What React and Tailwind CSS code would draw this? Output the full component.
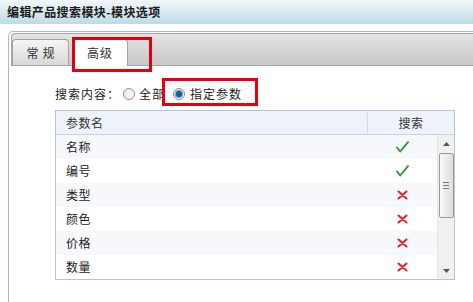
import React from 'react';

const font = { fontFamily: '"Noto Sans CJK SC", "Liberation Sans", sans-serif' };

const rows = [
  { name: '名称', on: true },
  { name: '编号', on: true },
  { name: '类型', on: false },
  { name: '颜色', on: false },
  { name: '价格', on: false },
  { name: '数量', on: false },
];

function Check() {
  return (
    <svg width="13" height="12" viewBox="0 0 13 12">
      <path d="M1 6.5 L4.2 10.5 L12 1.2" fill="none" stroke="#2f9a2f" strokeWidth="1.9" strokeLinecap="round" strokeLinejoin="round" />
    </svg>
  );
}

function Cross() {
  return (
    <svg width="11" height="10" viewBox="0 0 11 10">
      <path d="M1.5 1.5 L9.5 8.5 M9.5 1.5 L1.5 8.5" fill="none" stroke="#e0252b" strokeWidth="2.1" strokeLinecap="round" />
    </svg>
  );
}

function Radio({ checked }) {
  return (
    <span className="w-[12px] h-[12px] rounded-full border border-[#8e8f8f] bg-gradient-to-br from-[#e6e6e6] to-[#ffffff] flex items-center justify-center">
      {checked && <span className="w-[6px] h-[6px] rounded-full bg-[#1b5e97] shadow-[0_0_0_1px_#5fa3d8]" />}
    </span>
  );
}

export default function App() {
  return (
    <div style={font} className="w-[473px] h-[302px] bg-white relative overflow-hidden text-[12px] text-[#222]">
      {/* Title */}
      <div className="h-[24px] bg-gradient-to-b from-[#f3f6f8] to-[#bddbe7] flex items-center pl-[7px] font-bold text-[12px] tracking-[0.4px] text-[#1a1a1a]">
        编辑产品搜索模块-模块选项
      </div>

      {/* Panel */}
      <div className="mt-[7px] ml-[8px] h-[271px] border-l border-t border-[#a4bccb] rounded-tl-[5px]">
        <div className="pt-[1px] pl-[2px]">
          <div className="h-[33px] border-t border-l border-b border-[#a6a6a6] rounded-tl-[4px] bg-gradient-to-b from-[#e4e4e4] to-[#c8c8c8] flex items-end">
            <div className="w-[57px] h-[26px] border border-b-0 border-[#a3a3a3] rounded-t-[4px] bg-gradient-to-b from-[#f5f5f5] to-[#d8d8d8] flex items-center justify-center tracking-[4px] pl-[4px] text-[#333]">
              常规
            </div>
            <div className="ml-[3px] w-[56px] h-[27px] -mb-px border border-b-0 border-[#a3a3a3] rounded-t-[4px] bg-white flex items-center justify-center tracking-[1px] text-[#333]">
              高级
            </div>
          </div>
        </div>

        {/* Body */}
        <div className="pl-[46px] pt-[18px]">
          <div className="h-[20px] flex items-center text-[#222] tracking-[1px]">
            <span>搜索内容：</span>
            <span className="ml-[3px]"><Radio /></span>
            <span className="ml-[4px]">全部</span>
            <span className="ml-[8px]"><Radio checked /></span>
            <span className="ml-[5px]">指定参数</span>
          </div>

          {/* Table */}
          <div className="mt-[6px] w-[400px] border border-[#b5c5d8]">
            <div className="h-[24px] bg-[#eef3fb] border-b border-[#c5d3e5] flex items-center text-[#333] tracking-[0.5px]">
              <div className="w-[311px] pl-[10px]">参数名</div>
              <div className="w-px h-[20px] bg-[#cfd9e7]" />
              <div className="flex-1 text-center">搜索</div>
            </div>
            <div className="flex">
              <div className="flex-1 tracking-[0.5px]">
                {rows.map((r, i) => (
                  <div key={r.name} className={`h-[24px] flex items-center ${i % 2 === 0 ? 'bg-[#f7f8fc]' : 'bg-white'}`}>
                    <div className="w-[312px] pl-[10px]">{r.name}</div>
                    <div className="flex-1 flex justify-center">{r.on ? <Check /> : <Cross />}</div>
                  </div>
                ))}
              </div>
              {/* Scrollbar */}
              <div className="w-[17px] bg-[#f0f0f0] border-l border-[#e6e6e6] flex flex-col items-center">
                <div className="h-[18px] w-full flex items-center justify-center">
                  <svg width="7" height="4" viewBox="0 0 7 4"><path d="M0 4 L3.5 0 L7 4 Z" fill="#555" /></svg>
                </div>
                <div className="w-[15px] h-[65px] border border-[#9a9a9a] rounded-[2px] bg-gradient-to-r from-[#fbfbfb] to-[#dcdcdc] flex flex-col items-center justify-center gap-[2px]">
                  <span className="w-[6px] h-px bg-[#777]" />
                  <span className="w-[6px] h-px bg-[#777]" />
                  <span className="w-[6px] h-px bg-[#777]" />
                </div>
                <div className="flex-1" />
                <div className="h-[17px] w-full flex items-center justify-center">
                  <svg width="7" height="4" viewBox="0 0 7 4"><path d="M0 0 L3.5 4 L7 0 Z" fill="#555" /></svg>
                </div>
              </div>
            </div>
          </div>
        </div>
      </div>

      {/* Red highlight boxes */}
      <div className="absolute left-[72px] top-[37px] w-[80px] h-[35px] border-[3px] border-[#e3000f]" />
      <div className="absolute left-[162px] top-[78px] w-[96px] h-[28px] border-[3px] border-[#e3000f]" />
    </div>
  );
}
